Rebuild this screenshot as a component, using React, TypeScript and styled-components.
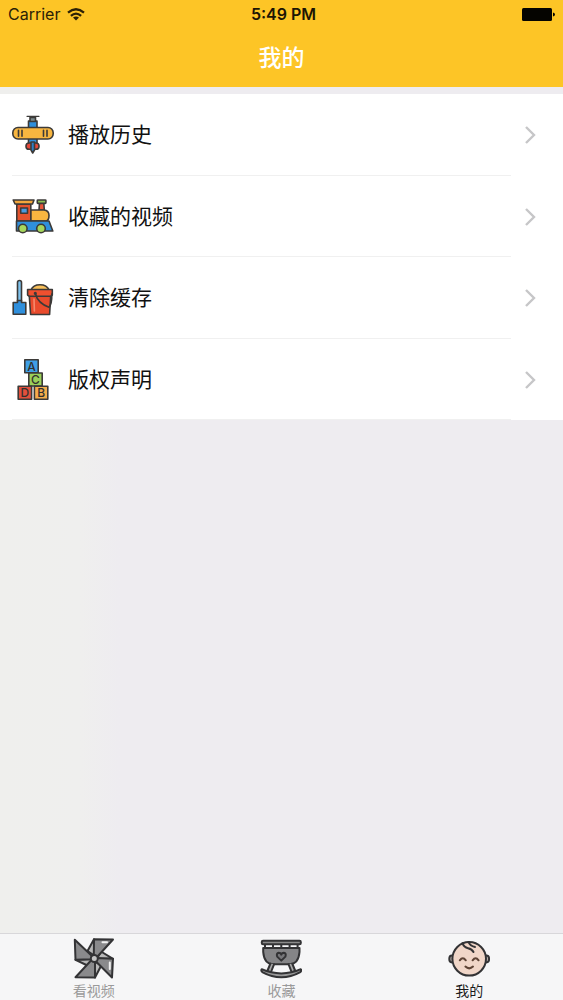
import React from "react";
import styled, { createGlobalStyle } from "styled-components";

const GlobalStyle = createGlobalStyle`
  * { box-sizing: border-box; }
  body {
    margin: 0;
    font-family: Inter, "Noto Sans CJK SC", sans-serif;
    color: #111;
  }
`;

const Screen = styled.div`
  min-height: 100vh;
  display: flex;
  flex-direction: column;
  background: linear-gradient(90deg, #efefed 0, #efefee 80px, #eeecf0 120px);
`;

const Header = styled.header`
  background: #fdc526;
  height: 87px;
  display: flex;
  flex-direction: column;
`;

const StatusBar = styled.div`
  height: 28px;
  padding: 0 8px;
  display: grid;
  grid-template-columns: 1fr auto 1fr;
  align-items: center;
  font-size: 16px;
  color: #2b2106;
`;

const Carrier = styled.div`
  display: flex;
  align-items: center;
  gap: 7px;
`;

const Clock = styled.time`
  padding-left: 4px;
  font-weight: 600;
  color: #1c1504;
`;

const BatterySlot = styled.div`
  display: flex;
  justify-content: flex-end;
`;

const Title = styled.h1`
  margin: 0;
  flex: 1;
  display: flex;
  align-items: center;
  justify-content: center;
  font-size: 23px;
  line-height: 32px;
  font-weight: 500;
  color: #fff;
`;

const Menu = styled.ul`
  margin: 7px 0 0;
  padding: 0;
  list-style: none;
  background: #fff;
  min-height: 326px;
  display: grid;
  grid-auto-rows: 1fr;
`;

const MenuItem = styled.li`
  display: flex;
  flex-direction: column;

  &::after {
    content: "";
    height: 1px;
    margin: 0 52px 0 12px;
    background: #f0f0f0;
  }
`;

const MenuLink = styled.a`
  flex: 1;
  display: flex;
  align-items: center;
  padding: 2px 26px 0 12px;
  gap: 14px;
  color: #111;
  text-decoration: none;
`;

const MenuLabel = styled.span`
  flex: 1;
  font-size: 21px;
  line-height: 30px;
`;

const TabBar = styled.nav`
  margin-top: auto;
  height: 67px;
  border-top: 1px solid #d8d7da;
  background: #f6f6f7;
  display: grid;
  grid-template-columns: repeat(3, 1fr);
`;

const Tab = styled.a<{ $active?: boolean }>`
  display: flex;
  flex-direction: column;
  align-items: center;
  padding-top: 4px;
  font-size: 14px;
  line-height: 22px;
  color: ${(p) => (p.$active ? "#1b1b1b" : "#9a9a9a")};
  text-decoration: none;
`;

const Icon = styled.svg.attrs({
  viewBox: "0 0 42 42",
  width: 42,
  height: 42,
  "aria-hidden": true,
})`
  flex: none;
  stroke: #3c3a38;
  stroke-width: 1.6;
  stroke-linejoin: round;
  stroke-linecap: round;

  text {
    font: 500 12px Inter, sans-serif;
    text-anchor: middle;
    stroke: none;
    fill: #33302e;
  }
`;

const TabIcon = styled(Icon)`
  stroke: #333335;
  stroke-width: 2;
`;

const Wifi = () => (
  <svg width="18" height="13" viewBox="0 0 18 13" aria-hidden="true" fill="none" stroke="#2b2106" strokeWidth="2.3">
    <path d="M1 4.6Q9-2 17 4.6" />
    <path d="M3.9 7.9Q9 3.3 14.1 7.9" />
    <path d="M9 12.6L6 9.6Q9 7.2 12 9.6Z" fill="#2b2106" stroke="none" />
  </svg>
);

const Battery = () => (
  <svg width="33" height="13" viewBox="0 0 33 13" role="img" aria-label="Battery full">
    <rect width="30" height="13" rx="1.5" fill="#050400" />
    <path d="M31 4.5Q33 5 33 6.5T31 8.5Z" fill="#050400" />
  </svg>
);

const Chevron = () => (
  <svg width="13" height="20" viewBox="0 0 13 20" aria-hidden="true" fill="none" stroke="#c6c6c8" strokeWidth="2.4">
    <path d="M2 2L10 10L2 18" />
  </svg>
);

const PlaneIcon = () => (
  <Icon>
    <rect x="16.5" y="7" width="8.5" height="23" fill="#2f8fdc" />
    <rect x="18" y="3.5" width="5.5" height="4" fill="#7b8a8c" />
    <path d="M15 2.3H27" strokeWidth="1.2" />
    <rect x="0.8" y="13.5" width="40.4" height="11.5" rx="5.2" fill="#f8b640" />
    <path d="M6.5 16.3V22.3M10 16.3V22.3M31.5 16.3V22.3M35 16.3V22.3" />
    <rect x="14" y="29" width="13" height="6.3" rx="3.1" fill="#e5483a" />
    <path d="M19 28H22.5V36L20.7 39L19 36Z" fill="#2f7fc4" />
  </Icon>
);

const TrainIcon = () => (
  <Icon>
    <path d="M27 14L27.5 7H31.8L32.3 14Z" fill="#e8563a" />
    <rect x="25.3" y="4" width="8.6" height="3.4" rx="0.6" fill="#8cc152" />
    <path d="M18.5 14H32Q37 14.5 37 19.5T34 25H18.5Z" fill="#f8b640" />
    <rect x="4.8" y="8" width="14" height="17" fill="#e5532d" />
    <path d="M1.2 4H22L20.5 8H3Z" fill="#f3a73c" />
    <rect x="8.7" y="12" width="6.8" height="5.2" fill="#4a9be0" />
    <path d="M4.5 25H37L40.8 35H4.5Z" fill="#2f8fdc" />
    <circle cx="10.8" cy="32.5" r="4.3" fill="#a5d65c" />
    <circle cx="29" cy="32.5" r="4.3" fill="#a5d65c" />
  </Icon>
);

const BucketIcon = () => (
  <Icon>
    <rect x="5.5" y="3.5" width="4" height="22" rx="2" fill="#7fc3ee" />
    <path d="M1.2 25.5H5.5V23.5H9.5V25.5H13.8V37.2H1.2Z" fill="#2f8fdc" />
    <path d="M19 13Q21 7.8 28 7.8T37 13Z" fill="#f8c05a" />
    <path d="M17.3 19H38.7L37.6 37.5H18.6Z" fill="#e94b2c" />
    <path d="M22 22L22.4 34" stroke="#f58a6c" />
    <path d="M15.6 12.5H40.3V18L38.5 19.3H17.4L15.6 18Z" fill="#f0502f" />
    <path d="M23.3 16.5Q26 26.5 37 30.2Q40 27 39.8 17" fill="none" />
    <circle cx="23.3" cy="16.3" r="0.8" fill="#3c3a38" />
  </Icon>
);

const BlocksIcon = () => (
  <Icon>
    <rect x="12.8" y="0.8" width="13.4" height="13" fill="#3f9fe6" />
    <rect x="16.8" y="14" width="13.4" height="13" fill="#9bd05a" />
    <rect x="6.2" y="27.2" width="13.4" height="13" fill="#e2503c" />
    <rect x="22.4" y="27.2" width="13.4" height="13" fill="#f5ad4c" />
    <text x="19.5" y="11.7">A</text>
    <text x="23.5" y="24.9">C</text>
    <text x="12.9" y="38.1">D</text>
    <text x="29.1" y="38.1">B</text>
  </Icon>
);

const PinwheelIcon = () => (
  <TabIcon strokeWidth="1.8">
    <path d="M14.5 13L21 1.3L22 18Z" fill="#b8b8b8" />
    <path d="M28 13.5L40 20.8L24 20.5Z" fill="#b8b8b8" />
    <path d="M28.5 27L22 39.5L20.5 23Z" fill="#b8b8b8" />
    <path d="M2.5 21.8L14.5 27.5L20 21Z" fill="#b8b8b8" />
    <path d="M21 1.3L40 1.5L24.5 18.5L20.8 17.5Z" fill="#8a8a8c" />
    <path d="M40 20.8L39 39.5L23 23.5L24 20Z" fill="#8a8a8c" />
    <path d="M22 39.5L2.5 39.3L18 22.5L22 23Z" fill="#8a8a8c" />
    <path d="M2.5 21.8L1.8 1.8L19.5 18.5L18.5 21.3Z" fill="#8a8a8c" />
    <path d="M29.5 4.3H34M36.8 24.5V31" stroke="#f0f0f0" />
    <circle cx="21.3" cy="20.5" r="3.5" fill="#c4c4c4" />
  </TabIcon>
);

const CradleIcon = () => (
  <TabIcon>
    <path d="M5 6V11M13 6V11M21.3 6V11M29.6 6V11M37.6 6V11" />
    <rect x="1.8" y="2.8" width="39" height="3.4" rx="1.2" fill="#8c8c8c" />
    <path d="M3.2 10H39.5V14Q38.5 26.3 29 26.3H13.7Q4.2 26.3 3.2 14Z" fill="#858587" />
    <path d="M21.3 22.6L17.2 18.6Q16 15.3 18.8 14.8Q20.6 14.8 21.3 16.6Q22 14.8 23.8 14.8Q26.6 15.3 25.4 18.6Z" fill="#77777a" />
    <path d="M10.5 25.5L7.3 33L10.8 34.5L14 26.3M32.2 25.5L35.3 33L31.8 34.5L28.6 26.3" fill="#a8a8a8" />
    <path d="M1.7 31.2Q11 35.4 21.3 35.4T40.8 31.2Q42 33 39.8 34.3Q31 39.2 21.3 39.2T2.8 34.3Q0.6 33 1.7 31.2Z" fill="#999" />
  </TabIcon>
);

const BabyIcon = () => (
  <TabIcon>
    <ellipse cx="3.9" cy="21" rx="2.6" ry="3.4" fill="#b9b0ac" />
    <ellipse cx="38.5" cy="21" rx="2.6" ry="3.4" fill="#b9b0ac" />
    <circle cx="21.2" cy="20.8" r="16.8" fill="#f0d6c8" />
    <path d="M14.5 5.2Q16 9.5 20 10.2Q24 11 25.5 14M20.5 4Q22 8 27 9" fill="none" />
    <path d="M11.8 22.3Q14.8 18.4 17.8 22.3M24.6 22.3Q27.6 18.4 30.6 22.3" fill="none" stroke="#5d4335" />
    <path d="M17.4 28.6Q21.2 32.2 25 28.6" fill="none" stroke="#5d4335" />
  </TabIcon>
);

const items = [
  { label: "播放历史", icon: PlaneIcon },
  { label: "收藏的视频", icon: TrainIcon },
  { label: "清除缓存", icon: BucketIcon },
  { label: "版权声明", icon: BlocksIcon },
];

const tabs = [
  { label: "看视频", icon: PinwheelIcon, active: false },
  { label: "收藏", icon: CradleIcon, active: false },
  { label: "我的", icon: BabyIcon, active: true },
];

export default function App() {
  return (
    <Screen>
      <GlobalStyle />
      <Header>
        <StatusBar>
          <Carrier>
            Carrier
            <Wifi />
          </Carrier>
          <Clock>5:49 PM</Clock>
          <BatterySlot>
            <Battery />
          </BatterySlot>
        </StatusBar>
        <Title>我的</Title>
      </Header>
      <main>
        <Menu>
          {items.map(({ label, icon: Glyph }) => (
            <MenuItem key={label}>
              <MenuLink href="#">
                <Glyph />
                <MenuLabel>{label}</MenuLabel>
                <Chevron />
              </MenuLink>
            </MenuItem>
          ))}
        </Menu>
      </main>
      <TabBar>
        {tabs.map(({ label, icon: Glyph, active }) => (
          <Tab key={label} href="#" $active={active} aria-current={active ? "page" : undefined}>
            <Glyph />
            {label}
          </Tab>
        ))}
      </TabBar>
    </Screen>
  );
}
